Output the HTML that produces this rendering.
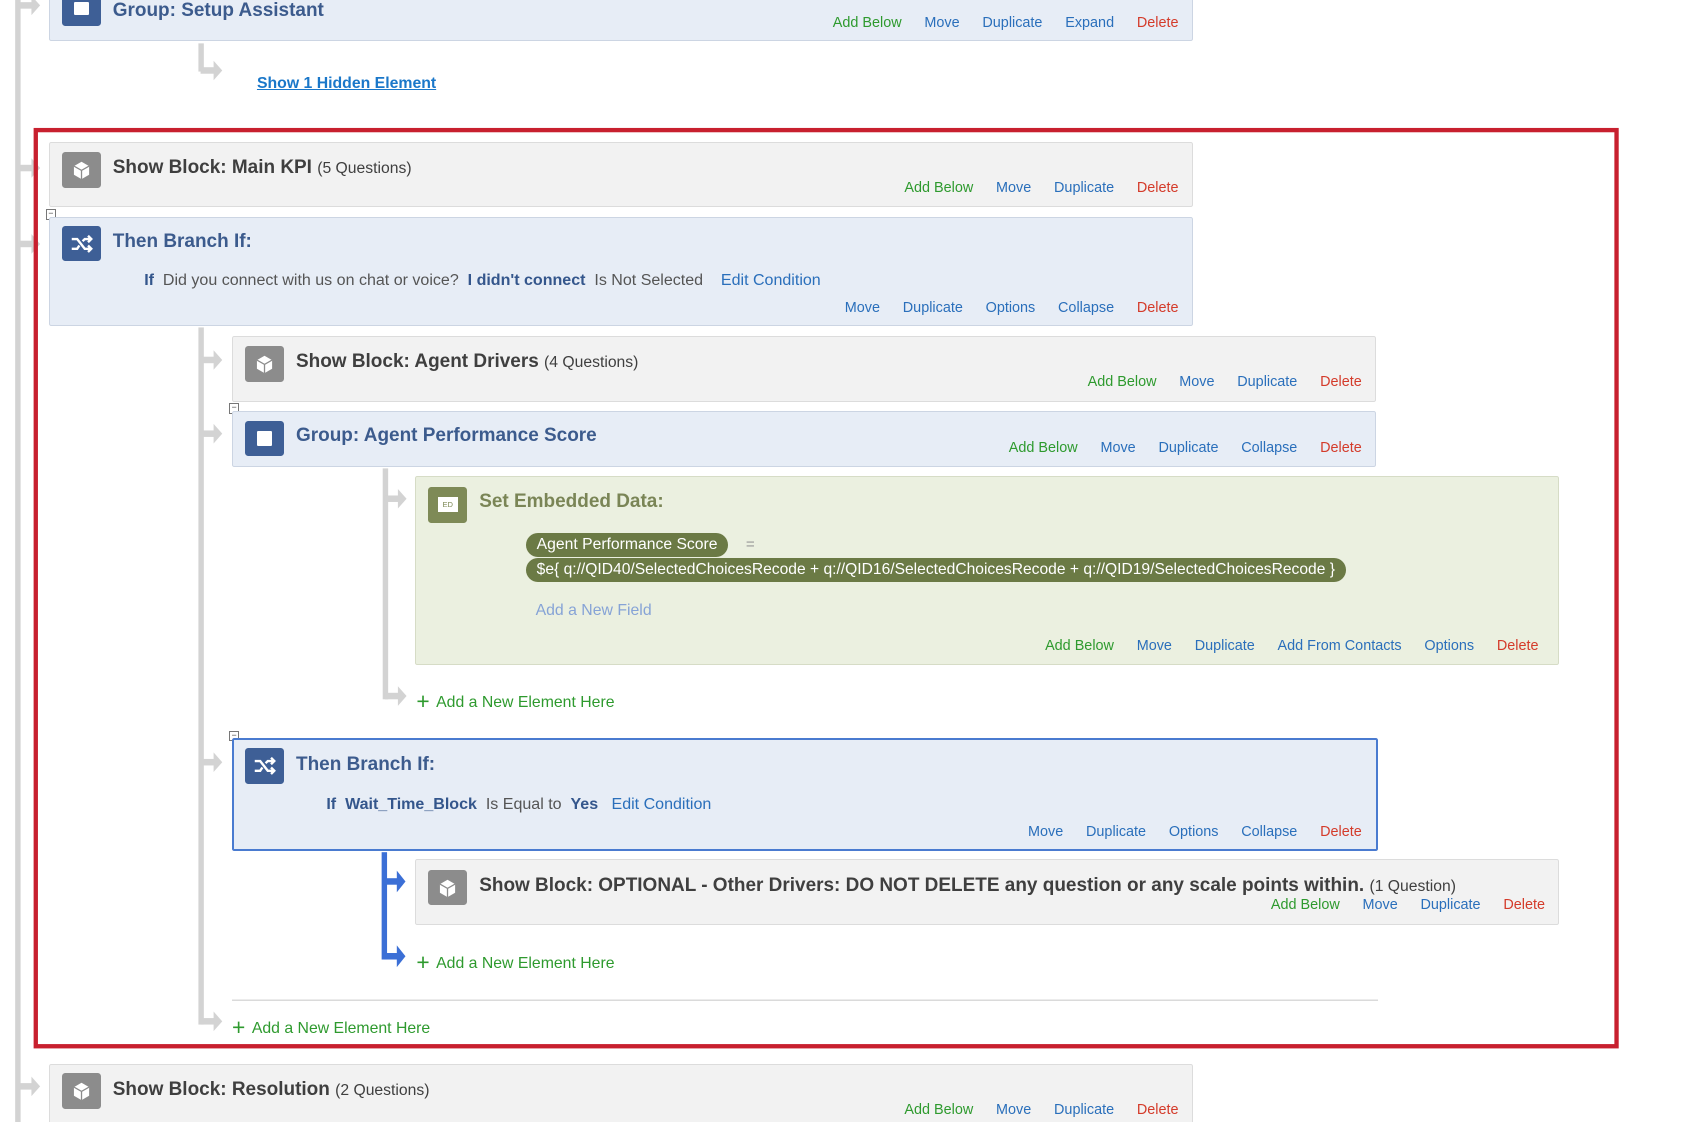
<!DOCTYPE html>
<html><head><meta charset="utf-8"><style>
html,body{margin:0;padding:0;background:#fff;overflow:hidden}
body{width:1700px;height:1122px}
#w{position:relative;width:1568px;height:1035px;zoom:1.0842;font-family:"Liberation Sans",sans-serif}
.a{position:absolute}
.box{position:absolute;box-sizing:border-box;border:1px solid #d6d9de;border-radius:2px}
.g{background:#f2f2f2;border-color:#dcdcdc}
.b{background:#e7edf6;border-color:#ccd5e3}
.e{background:#ebf0e0;border-color:#d6dcc6}
.ic{position:absolute;width:36px;height:33px;border-radius:3px}
.icg{background:#8c8c8c}.icb{background:#3e5f96}.ice{background:#7e8a57}
.t{position:absolute;font-weight:bold;font-size:17.5px;white-space:nowrap}
.tg{color:#3f3f3f}.tb{color:#3c5b8d}.te{color:#7a8556}
.t small{font-weight:normal;font-size:14.5px}
.acts{position:absolute;font-size:13.3px;white-space:nowrap;display:flex;gap:21px}
.gr{color:#2e9a2e}.bl{color:#2a6fbb}.rd{color:#d43b2a}
.sq{position:absolute;width:8px;height:8px;border:1px solid #777;background:#fff;font-size:8px;line-height:7px;text-align:center;color:#444}
.add{position:absolute;color:#2e9a2e;font-size:14.6px;white-space:nowrap}
.add b{font-size:21px;font-weight:normal;vertical-align:-2px;margin-right:6px}
.cond{position:absolute;font-size:14.8px;color:#555;white-space:nowrap}
.cond .k{color:#34568c;font-weight:bold}
.pill{position:absolute;background:#6b7a45;color:#fff;font-size:14.5px;border-radius:11px;padding:0 10px;height:22px;line-height:22px;white-space:nowrap}
</style></head><body><div id="w">
<svg class="a" style="left:0;top:0" width="1568" height="1035">
<defs><g id="ar"><rect x="0" y="-3" width="14" height="6" fill="#d3d3d3"/><path d="M12 -9 L20 0 L12 9Z" fill="#d3d3d3"/></g>
<g id="arb"><rect x="0" y="-3" width="14" height="6" fill="#3b6fd6"/><path d="M12 -10 L20 0 L12 10Z" fill="#3b6fd6"/></g></defs>
<rect x="14" y="0" width="5" height="1035" fill="#d3d3d3"/>
<use href="#ar" x="17" y="5"/><use href="#ar" x="17" y="155"/><use href="#ar" x="17" y="225"/><use href="#ar" x="17" y="1002"/>
<rect x="183" y="40" width="5" height="26" fill="#d3d3d3"/><use href="#ar" x="185" y="65"/>
<rect x="183" y="302" width="5" height="643" fill="#d3d3d3"/>
<use href="#ar" x="185" y="332"/><use href="#ar" x="185" y="400"/><use href="#ar" x="185" y="703"/><use href="#ar" x="185" y="942"/>
<rect x="353" y="432" width="5" height="213" fill="#d3d3d3"/>
<use href="#ar" x="355" y="460"/><use href="#ar" x="355" y="642"/>
<rect x="352" y="786" width="5" height="99" fill="#3b6fd6"/>
<use href="#arb" x="354" y="813"/><use href="#arb" x="354" y="882"/>
<rect x="214" y="922" width="1057" height="1" fill="#ccc"/>
<rect x="33" y="120" width="1458" height="845" fill="none" stroke="#c8202f" stroke-width="4"/>
</svg>

<div class="box b" style="left:45px;top:-5px;width:1055px;height:43px"></div>
<div class="ic icb" style="left:57px;top:-4px;height:28px"><div class="a" style="left:11px;top:6px;width:14px;height:12px;background:#fff;border-radius:1px"></div></div>
<div class="t tb" style="left:104px;top:0px">Group: Setup Assistant</div>
<div class="acts" style="right:481px;top:14px"><span class="gr">Add Below</span><span class="bl">Move</span><span class="bl">Duplicate</span><span class="bl">Expand</span><span class="rd">Delete</span></div>
<div class="a" style="left:237px;top:69px;font-size:14.6px;font-weight:bold;color:#1a77c9;text-decoration:underline">Show 1 Hidden Element</div>

<div class="box g" style="left:45px;top:131px;width:1055px;height:60px"></div>
<div class="ic icg" style="left:57px;top:140px"><svg width="36" height="33"><path d="M18 9 L25 13 L25 21 L18 25 L11 21 L11 13Z" fill="#fff"/><path d="M11 13 L18 17 L25 13 M18 17 V25" stroke="#8c8c8c" stroke-width="1.2" fill="none"/></svg></div>
<div class="t tg" style="left:104px;top:145px">Show Block: Main KPI <small>(5 Questions)</small></div>
<div class="acts" style="right:481px;top:166px"><span class="gr">Add Below</span><span class="bl">Move</span><span class="bl">Duplicate</span><span class="rd">Delete</span></div>
<div class="sq" style="left:42px;top:193px">−</div>

<div class="box b" style="left:45px;top:200px;width:1055px;height:101px"></div>
<div class="ic icb" style="left:57px;top:208px"><svg width="36" height="33"><path d="M9 12 H14 L21 21 H27 M9 21 H14 L16 18 M19 14 L21 12 H27 M24 9 L27 12 L24 15 M24 18 L27 21 L24 24" stroke="#fff" stroke-width="2.2" fill="none"/></svg></div>
<div class="t tb" style="left:104px;top:213px">Then Branch If:</div>
<div class="cond" style="left:133px;top:250px"><span class="k">If</span>&nbsp; Did you connect with us on chat or voice?&nbsp; <span class="k">I didn't connect</span>&nbsp; Is Not Selected &nbsp; &nbsp;<span class="bl">Edit Condition</span></div>
<div class="acts" style="right:481px;top:277px"><span class="bl">Move</span><span class="bl">Duplicate</span><span class="bl">Options</span><span class="bl">Collapse</span><span class="rd">Delete</span></div>

<div class="box g" style="left:214px;top:310px;width:1055px;height:61px"></div>
<div class="ic icg" style="left:226px;top:319px"><svg width="36" height="33"><path d="M18 9 L25 13 L25 21 L18 25 L11 21 L11 13Z" fill="#fff"/><path d="M11 13 L18 17 L25 13 M18 17 V25" stroke="#8c8c8c" stroke-width="1.2" fill="none"/></svg></div>
<div class="t tg" style="left:273px;top:324px">Show Block: Agent Drivers <small>(4 Questions)</small></div>
<div class="acts" style="right:312px;top:345px"><span class="gr">Add Below</span><span class="bl">Move</span><span class="bl">Duplicate</span><span class="rd">Delete</span></div>
<div class="sq" style="left:211px;top:372px">−</div>

<div class="box b" style="left:214px;top:379px;width:1055px;height:52px"></div>
<div class="ic icb" style="left:226px;top:388px"><div class="a" style="left:11px;top:10px;width:14px;height:13px;background:#fff;border-radius:1px"></div></div>
<div class="t tb" style="left:273px;top:392px">Group: Agent Performance Score</div>
<div class="acts" style="right:312px;top:406px"><span class="gr">Add Below</span><span class="bl">Move</span><span class="bl">Duplicate</span><span class="bl">Collapse</span><span class="rd">Delete</span></div>

<div class="box e" style="left:383px;top:439px;width:1055px;height:174px"></div>
<div class="ic ice" style="left:395px;top:449px"><div class="a" style="left:9px;top:9px;width:18px;height:14px;background:#fff;color:#7e8a57;font-size:7px;line-height:14px;text-align:center">ED</div></div>
<div class="t te" style="left:442px;top:453px">Set Embedded Data:</div>
<div class="pill" style="left:485px;top:492px">Agent Performance Score</div>
<div class="a" style="left:688px;top:494px;color:#999;font-size:14px">=</div>
<div class="pill" style="left:485px;top:515px;font-size:14.4px">$e{ q://QID40/SelectedChoicesRecode + q://QID16/SelectedChoicesRecode + q://QID19/SelectedChoicesRecode }</div>
<div class="a" style="left:494px;top:555px;color:#86a3d6;font-size:14.6px">Add a New Field</div>
<div class="acts" style="right:149px;top:588px"><span class="gr">Add Below</span><span class="bl">Move</span><span class="bl">Duplicate</span><span class="bl">Add From Contacts</span><span class="bl">Options</span><span class="rd">Delete</span></div>
<div class="add" style="left:384px;top:635px"><b>+</b>Add a New Element Here</div>

<div class="sq" style="left:211px;top:674px">−</div>
<div class="box b" style="left:214px;top:681px;width:1057px;height:104px;border:2px solid #4a7bd0"></div>
<div class="ic icb" style="left:226px;top:690px"><svg width="36" height="33"><path d="M9 12 H14 L21 21 H27 M9 21 H14 L16 18 M19 14 L21 12 H27 M24 9 L27 12 L24 15 M24 18 L27 21 L24 24" stroke="#fff" stroke-width="2.2" fill="none"/></svg></div>
<div class="t tb" style="left:273px;top:695px">Then Branch If:</div>
<div class="cond" style="left:301px;top:733px"><span class="k">If</span>&nbsp; <span class="k">Wait_Time_Block</span>&nbsp; Is Equal to&nbsp; <span class="k">Yes</span> &nbsp; <span class="bl">Edit Condition</span></div>
<div class="acts" style="right:312px;top:760px"><span class="bl">Move</span><span class="bl">Duplicate</span><span class="bl">Options</span><span class="bl">Collapse</span><span class="rd">Delete</span></div>

<div class="box g" style="left:383px;top:792px;width:1055px;height:61px"></div>
<div class="ic icg" style="left:395px;top:802px"><svg width="36" height="33"><path d="M18 9 L25 13 L25 21 L18 25 L11 21 L11 13Z" fill="#fff"/><path d="M11 13 L18 17 L25 13 M18 17 V25" stroke="#8c8c8c" stroke-width="1.2" fill="none"/></svg></div>
<div class="t tg" style="left:442px;top:807px">Show Block: OPTIONAL - Other Drivers: DO NOT DELETE any question or any scale points within. <small>(1 Question)</small></div>
<div class="acts" style="right:143px;top:827px"><span class="gr">Add Below</span><span class="bl">Move</span><span class="bl">Duplicate</span><span class="rd">Delete</span></div>
<div class="add" style="left:384px;top:875px"><b>+</b>Add a New Element Here</div>
<div class="add" style="left:214px;top:935px"><b>+</b>Add a New Element Here</div>

<div class="box g" style="left:45px;top:981px;width:1055px;height:70px"></div>
<div class="ic icg" style="left:57px;top:990px"><svg width="36" height="33"><path d="M18 9 L25 13 L25 21 L18 25 L11 21 L11 13Z" fill="#fff"/><path d="M11 13 L18 17 L25 13 M18 17 V25" stroke="#8c8c8c" stroke-width="1.2" fill="none"/></svg></div>
<div class="t tg" style="left:104px;top:995px">Show Block: Resolution <small>(2 Questions)</small></div>
<div class="acts" style="right:481px;top:1016px"><span class="gr">Add Below</span><span class="bl">Move</span><span class="bl">Duplicate</span><span class="rd">Delete</span></div>
</div></body></html>
